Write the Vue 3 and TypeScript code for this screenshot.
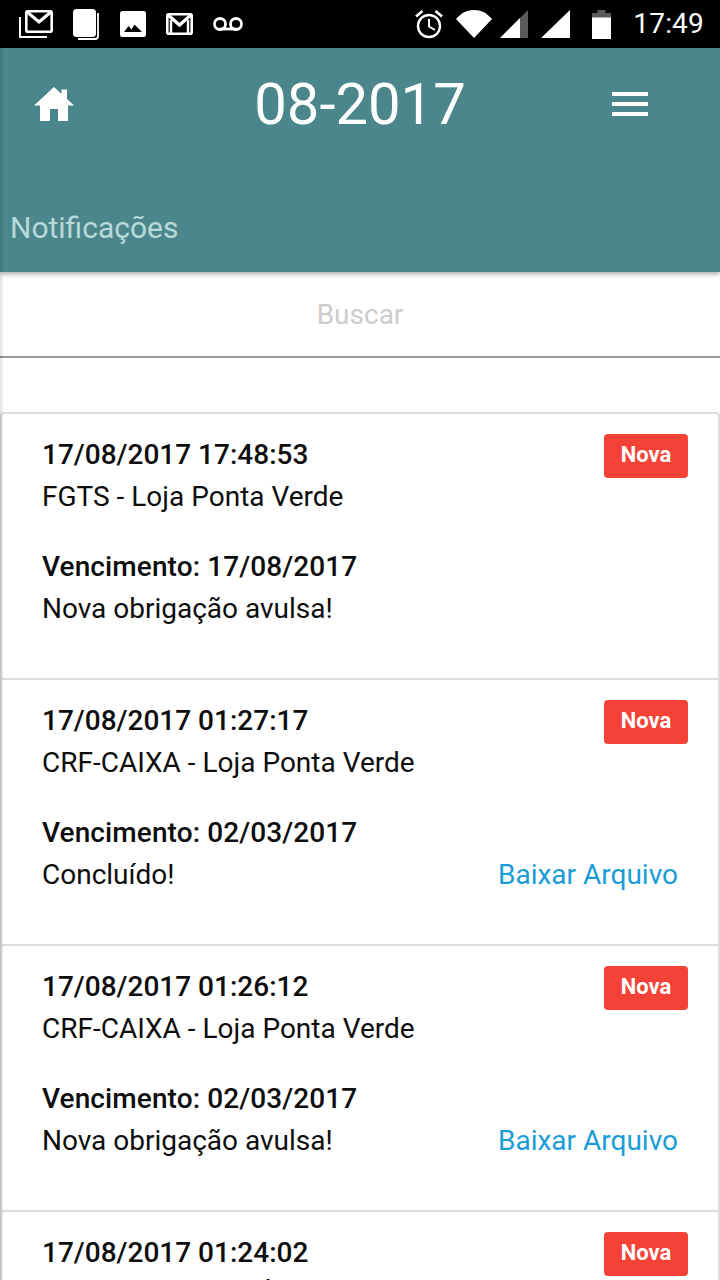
<script setup lang="ts">
interface Notice {
  stamp: string
  title: string
  due: string
  status: string
  download: boolean
}
const notices: Notice[] = [
  { stamp: '17/08/2017 17:48:53', title: 'FGTS - Loja Ponta Verde', due: '17/08/2017', status: 'Nova obrigação avulsa!', download: false },
  { stamp: '17/08/2017 01:27:17', title: 'CRF-CAIXA - Loja Ponta Verde', due: '02/03/2017', status: 'Concluído!', download: true },
  { stamp: '17/08/2017 01:26:12', title: 'CRF-CAIXA - Loja Ponta Verde', due: '02/03/2017', status: 'Nova obrigação avulsa!', download: true },
  { stamp: '17/08/2017 01:24:02', title: 'LICENÇAS SANITÁRIAS - Loja Ponta Verde', due: '02/03/2017', status: 'Nova obrigação avulsa!', download: true },
]
</script>

<template>
  <div class="screen">
    <div class="status">
      <div class="status-left">
        <svg width="34" height="28" viewBox="0 0 34 28"><path d="M0 7h2v19h26v2H0z" fill="#fff"/><rect x="7.300" y="1.300" width="25.400" height="20.400" rx="1.500" fill="none" stroke="#fff" stroke-width="2.600"/><path d="M7.500 1.500L20 12l12.500-10.500" fill="none" stroke="#fff" stroke-width="3.200"/></svg>
        <svg width="27" height="31" viewBox="0 0 27 31"><path d="M25 4v23a3 3 0 0 1-3 3H5" fill="none" stroke="#fff" stroke-width="1.800"/><rect x="0" y="0" width="23" height="28" rx="3.500" fill="#fff"/></svg>
        <svg width="26" height="26" viewBox="0 0 26 26"><rect width="26" height="26" rx="2.500" fill="#fff"/><path d="M4 21l4.500-6 3 3.500 3-5L22 21z" fill="#000"/></svg>
        <svg width="27" height="22" viewBox="0 0 27 22"><rect x="1.300" y="1.300" width="24.400" height="19.400" rx="1.500" fill="none" stroke="#fff" stroke-width="2.600"/><path d="M1.500 1.500L13.500 12 25.500 1.500" fill="none" stroke="#fff" stroke-width="3.200"/><path d="M5 7v13M22 7v13" stroke="#fff" stroke-width="2.400"/></svg>
        <svg width="30" height="14" viewBox="0 0 30 14"><circle cx="7" cy="7" r="5.500" fill="none" stroke="#fff" stroke-width="2.800"/><circle cx="23" cy="7" r="5.500" fill="none" stroke="#fff" stroke-width="2.800"/><path d="M7 12h16" stroke="#fff" stroke-width="2.800"/></svg>
      </div>
      <div class="status-right">
        <svg width="28" height="29" viewBox="0 0 28 29"><circle cx="14" cy="16" r="11" fill="none" stroke="#fff" stroke-width="2.400"/><path d="M14 9v7.500l6 3.500" fill="none" stroke="#fff" stroke-width="2"/><path d="M1 6.500L7.500 1M27 6.500L20.500 1" stroke="#fff" stroke-width="2.600"/></svg>
        <svg class="wifi" width="36" height="28" viewBox="0 0 36 28"><path d="M0 9C5 3.200 11 0 18 0s13 3.200 18 9L18 28z" fill="#fff"/></svg>
        <svg class="sig1" width="28" height="28" viewBox="0 0 28 28"><path d="M28 0L0 28h28z" fill="#5a5a5a"/><path d="M20 8L0 28h20z" fill="#fff"/></svg>
        <svg class="sig2" width="29" height="28" viewBox="0 0 29 28"><path d="M29 0L0 28h29z" fill="#fff"/></svg>
        <svg class="batt" width="19" height="29" viewBox="0 0 19 29"><path d="M5.500 0h8v3H19v5H0V3h5.500z" fill="#5a5a5a"/><rect y="7.500" width="19" height="21.500" fill="#fff"/></svg>
        <span class="clock">17:49</span>
      </div>
    </div>

    <header class="bar">
      <div class="bar-top">
        <svg class="home" width="40" height="34" viewBox="0 0 40 34"><path d="M20 0L0 18.500h6V34h10V22h8v12h10V18.500h6l-7-6.500V2.500h-5.500v4.400z" fill="#fff"/></svg>
        <h1 class="month">08-2017</h1>
        <div class="menu"><i></i><i></i><i></i></div>
      </div>
      <div class="page-title">Notificações</div>
    </header>

    <div class="search">Buscar</div>

    <section class="list">
      <article v-for="n in notices" :key="n.stamp" class="card">
        <div class="row">
          <div class="line strong">{{ n.stamp }}</div>
          <span class="badge">Nova</span>
        </div>
        <div class="line">{{ n.title }}</div>
        <div class="line strong due">Vencimento: {{ n.due }}</div>
        <div class="row">
          <div class="line">{{ n.status }}</div>
          <a v-if="n.download" class="link">Baixar Arquivo</a>
        </div>
      </article>
    </section>
  </div>
</template>

<style>
html, body { margin: 0; background: #fff; }
</style>

<style scoped>
.screen {
  width: 720px;
  height: 1280px;
  overflow: hidden;
  background: #fff;
  font-family: Roboto, "Liberation Sans", sans-serif;
  color: #0e0e0e;
  display: flex;
  flex-direction: column;
  position: relative;
}
.screen::after {
  content: "";
  position: absolute;
  left: 0;
  top: 48px;
  bottom: 0;
  width: 4px;
  background: linear-gradient(to right, rgba(0, 0, 0, 0.12), rgba(0, 0, 0, 0));
  z-index: 2;
}
.status {
  height: 48px;
  flex: none;
  background: #000;
  display: flex;
  justify-content: space-between;
  align-items: center;
}
.status-left {
  display: flex;
  align-items: center;
  gap: 20px;
  padding-left: 19px;
}
.status-right {
  display: flex;
  align-items: center;
  padding-right: 16px;
}
.wifi { margin-left: 13px; }
.sig1 { margin-left: 8px; }
.sig2 { margin-left: 13px; }
.batt { margin-left: 22px; }
.clock {
  margin-left: 22px;
  color: #fff;
  font-size: 28px;
  line-height: 48px;
  letter-spacing: 0.2px;
}
.bar {
  height: 224px;
  flex: none;
  background: #4a868c;
  box-shadow: 0 2px 5px rgba(0, 0, 0, 0.35);
  position: relative;
  z-index: 1;
}
.bar-top {
  display: grid;
  grid-template-columns: 1fr auto 1fr;
  align-items: center;
  height: 112px;
}
.home { margin-left: 34px; }
.month {
  margin: 0;
  color: #fff;
  font-size: 58px;
  font-weight: 400;
  line-height: 112px;
}
.menu {
  justify-self: end;
  margin-right: 72px;
  width: 36px;
  display: flex;
  flex-direction: column;
  gap: 6px;
}
.menu i {
  display: block;
  height: 4px;
  background: #fff;
}
.page-title {
  margin-top: 48px;
  padding-left: 10px;
  color: #b8d9da;
  font-size: 30px;
  line-height: 40px;
}
.search {
  height: 84px;
  flex: none;
  border-bottom: 2px solid #999;
  text-align: center;
  color: #ccc;
  font-size: 28px;
  line-height: 85px;
}
.list {
  margin-top: 54px;
  border-top: 2px solid #ddd;
  border-left: 2px solid #ddd;
  border-right: 2px solid #ddd;
  border-radius: 4px 4px 0 0;
}
.card {
  height: 244px;
  border-bottom: 2px solid #ddd;
  padding: 20px 32px 0 40px;
}
.row {
  display: flex;
  justify-content: space-between;
  align-items: flex-start;
}
.line {
  font-size: 28px;
  line-height: 42px;
}
.strong { font-weight: 500; }
.due {
  margin-top: 28px;
  letter-spacing: 0.1px;
}
.badge {
  width: 84px;
  height: 44px;
  margin-bottom: -2px;
  margin-right: -2px;
  border-radius: 4px;
  background: #f44336;
  color: #fff;
  font-size: 22px;
  font-weight: 700;
  line-height: 41px;
  text-align: center;
}
.link {
  color: #1a9cd8;
  font-size: 28px;
  line-height: 42px;
  margin-right: 8px;
}
</style>
